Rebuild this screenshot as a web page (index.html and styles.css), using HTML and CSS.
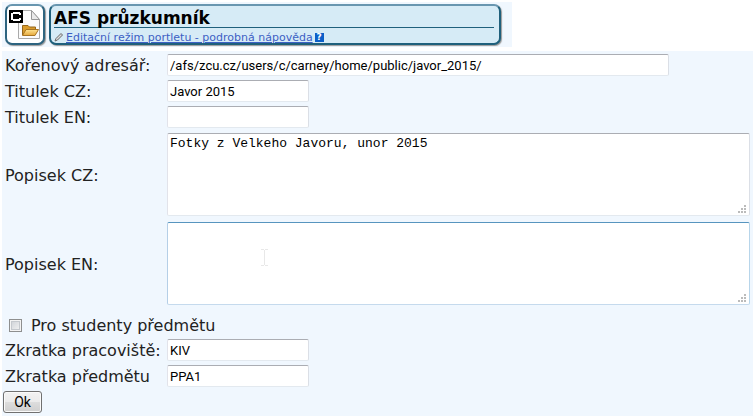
FILE: index.html
```html
<!DOCTYPE html>
<html lang="cs">
<head>
  <meta charset="UTF-8">
  <meta name="viewport" content="width=device-width, initial-scale=1.0">
  <title>AFS průzkumník</title>
  <link rel="stylesheet" href="styles.css">
</head>
<body>

  <header class="portlet-header">
    <div class="portlet-icon">
      <svg width="36" height="36" viewBox="0 0 36 36">
        <defs>
          <linearGradient id="folder" x1="0" y1="0" x2="0" y2="1">
            <stop offset="0" stop-color="#ffe391"/>
            <stop offset="1" stop-color="#e5a83b"/>
          </linearGradient>
        </defs>
        <path d="M11.500 4.500H24.500L32.500 13.500V32.500H11.500Z" fill="#fbfbfb" stroke="#aaa"/>
        <path d="M24.500 4.500V13.500H32.500Z" fill="#e9e9e9" stroke="#999"/>
        <path d="M15.500 29V19.500H21L22.500 21H28.500V24" fill="#d99b2b" stroke="#94671c"/>
        <path d="M15.500 29.500L19 23.500H31.500L28 29.500Z" fill="url(#folder)" stroke="#a87522"/>
        <rect x="2" y="4" width="14" height="13" fill="#000"/>
        <path d="M6 6H13V7H14V9H12V8H6V13H12V12H14V14H13V15H6V14H4V7H6Z" fill="#fff"/>
      </svg>
    </div>
    <div class="portlet-title">
      <h1>AFS průzkumník</h1>
      <div class="portlet-help">
        <svg width="10" height="11" viewBox="0 0 10 11">
          <path d="M1 9L2 6.500L7 1.500L8.500 3L3.500 8Z" fill="#ddd" stroke="#666"/>
        </svg>
        <a href="#">Editační režim portletu - podrobná nápověda</a>
        <span class="help-mark">?</span>
      </div>
    </div>
  </header>

  <form class="portlet-form">
    <div class="row">
      <label for="root">Kořenový adresář:</label>
      <input class="wide" type="text" id="root" value="/afs/zcu.cz/users/c/carney/home/public/javor_2015/">
    </div>
    <div class="row">
      <label for="title-cz">Titulek CZ:</label>
      <input type="text" id="title-cz" value="Javor 2015">
    </div>
    <div class="row">
      <label for="title-en">Titulek EN:</label>
      <input type="text" id="title-en">
    </div>
    <div class="row area">
      <label for="desc-cz">Popisek CZ:</label>
      <div class="area-box">
        <textarea id="desc-cz">Fotky z Velkeho Javoru, unor 2015</textarea>
        <svg class="grip" width="8" height="8" viewBox="0 0 8 8">
          <path d="M6 0h2v2h-2zM3 3h2v2h-2zM6 3h2v2h-2zM0 6h2v2h-2zM3 6h2v2h-2zM6 6h2v2h-2z"/>
        </svg>
      </div>
    </div>
    <div class="row area">
      <label for="desc-en">Popisek EN:</label>
      <div class="area-box">
        <textarea class="active" id="desc-en"></textarea>
        <svg class="grip" width="8" height="8" viewBox="0 0 8 8">
          <path d="M6 0h2v2h-2zM3 3h2v2h-2zM6 3h2v2h-2zM0 6h2v2h-2zM3 6h2v2h-2zM6 6h2v2h-2z"/>
        </svg>
        <svg class="cursor" width="7" height="17" viewBox="0 0 7 17">
          <path d="M0 .5H3M4 .5H7M3.500 1V16M0 16.500H3M4 16.500H7" stroke="#e8e8e8"/>
        </svg>
      </div>
    </div>
    <div class="check">
      <input type="checkbox" id="students">
      <label for="students">Pro studenty předmětu</label>
    </div>
    <div class="row">
      <label for="dept">Zkratka pracoviště:</label>
      <input type="text" id="dept" value="KIV">
    </div>
    <div class="row">
      <label for="subject">Zkratka předmětu</label>
      <input type="text" id="subject" value="PPA1">
    </div>
    <button type="submit">Ok</button>
  </form>

</body>
</html>
```

FILE: styles.css
```css
* {
  box-sizing: border-box;
}

body {
  margin: 2px;
  background: #fff;
  color: #222;
  font-family: Verdana, "DejaVu Sans", sans-serif;
  font-size: 16px;
}

.portlet-header {
  display: flex;
  gap: 4px;
  width: 510px;
  max-width: 100%;
  padding: 2px 11px 2px 3px;
  margin-bottom: 4px;
  background: #f0f7fe;
}

.portlet-icon {
  flex: none;
  width: 40px;
  height: 41px;
  border: 2px solid #2d6480;
  border-top-color: #6896b0;
  border-radius: 7px;
  background: #fff;
  box-shadow: 1px 1px 1px #999;
}

.portlet-icon svg {
  display: block;
}

.portlet-title {
  flex: 1;
  height: 41px;
  padding: 0 5px 0 3px;
  border: 2px solid #1f607c;
  border-top-color: #6896b0;
  border-radius: 7px;
  background: #d6ebf6;
  box-shadow: 1px 1px 1px #999;
}

h1 {
  margin: 0;
  height: 22px;
  border-bottom: 1px solid #1f607c;
  color: #000;
  font-size: 17px;
  line-height: 24px;
}

.portlet-help {
  display: flex;
  align-items: center;
  height: 16px;
  padding-top: 3px;
  font-size: 11px;
}

.portlet-help a {
  margin-left: 2px;
  color: #3c60c4;
  white-space: nowrap;
}

.help-mark {
  width: 9px;
  height: 9px;
  margin-left: 2px;
  background: #0c5fc8;
  color: #fff;
  font-size: 9px;
  font-weight: bold;
  line-height: 9px;
  text-align: center;
}

.portlet-form {
  padding: 3px;
  background: #f0f7fe;
}

.row {
  display: grid;
  grid-template-columns: 162px 1fr;
  align-items: center;
  margin-bottom: 4px;
}

.row label {
  padding-top: 1px;
  line-height: 21px;
  white-space: nowrap;
}

input[type="text"],
textarea {
  border: 1px solid #e3e9ef;
  border-top-color: #abadb3;
  border-left-color: #e2e3ea;
  border-right-color: #dbdfe6;
  border-radius: 2px;
  background: #fff;
  color: #000;
  outline: none;
}

input[type="text"] {
  width: 142px;
  height: 22px;
  padding: 0 2px;
  font-family: Roboto, sans-serif;
  font-size: 13px;
}

input.wide {
  width: 502px;
  max-width: 100%;
}

.area {
  margin: 5px 0 6px;
}

.area-box {
  position: relative;
}

textarea {
  display: block;
  width: 100%;
  height: 83px;
  padding: 2px;
  font-family: "Liberation Mono", monospace;
  font-size: 13px;
  resize: none;
}

textarea.active {
  border-color: #5795bf #b7d5ea #c5daed #b5cfe7;
}

.grip {
  position: absolute;
  right: 4px;
  bottom: 3px;
  fill: #bbb;
}

.cursor {
  position: absolute;
  left: 94px;
  top: 27px;
}

.check {
  display: flex;
  align-items: center;
  gap: 9px;
  height: 22px;
  margin: 9px 0 3px 4px;
}

.check input {
  appearance: none;
  width: 13px;
  height: 13px;
  margin: 0;
  border: 1px solid #8e8f8f;
  background: linear-gradient(135deg, #cbcfd5, #f6f6f6);
  box-shadow: inset 0 0 0 1px #f4f4f4, inset 0 0 0 2px #c5c9ce;
}

button {
  display: block;
  width: 39px;
  height: 22px;
  margin-left: -2px;
  padding: 0;
  border: 1px solid #707070;
  border-radius: 3px;
  background: linear-gradient(#f2f2f2 0%, #ebebeb 50%, #ddd 50%, #cfcfcf 100%);
  box-shadow: inset 0 0 0 1px #fafafa;
  color: #000;
  font-family: Roboto, sans-serif;
  font-size: 14px;
}
```
